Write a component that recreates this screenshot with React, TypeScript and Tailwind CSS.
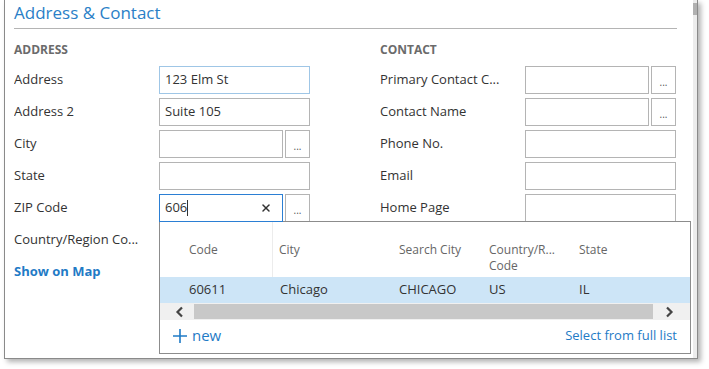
import { X } from 'lucide-react';

const font = { fontFamily: '"Open Sans", "Noto Sans", sans-serif' };

function Field({
  value,
  lookup,
  hover,
}: {
  value?: string;
  lookup?: boolean;
  hover?: boolean;
}) {
  return (
    <div className="flex gap-[2px] w-[151px] h-[28px]">
      <div
        className={`flex-1 h-full border ${
          hover ? 'border-[#9fc6e6]' : 'border-[#b4b4b4]'
        } bg-white flex items-center px-[5px] text-[13px] text-[#333]`}
      >
        {value}
      </div>
      {lookup && <LookupButton />}
    </div>
  );
}

function LookupButton() {
  return (
    <div className="w-[25px] h-full border border-[#b4b4b4] bg-white flex items-end justify-center pb-[6px] text-[10px] leading-none text-[#555]">
      ...
    </div>
  );
}

function Row({ label, children }: { label: string; children: React.ReactNode }) {
  return (
    <div className="flex items-center h-[28px]">
      <div className="w-[145px] text-[13px] text-[#333] truncate">{label}</div>
      {children}
    </div>
  );
}

function ZipDropdown() {
  return (
    <div className="absolute left-0 top-[27px] w-[532px] h-[133px] border border-[#8c8c8c] bg-white z-10 flex flex-col">
      <div className="flex h-[55px] text-[12px] text-[#666] leading-[16px]">
        <div className="w-[113px] pl-[29px] pt-[20px] border-r border-[#ececec]">Code</div>
        <div className="w-[126px] pl-[6px] pt-[20px]">City</div>
        <div className="w-[90px] pt-[20px]">Search City</div>
        <div className="w-[90px] pt-[20px]">
          Country/R...
          <br />
          Code
        </div>
        <div className="pt-[20px]">State</div>
      </div>
      <div className="flex items-center h-[26px] bg-[#cde5f7] text-[13px] text-[#333]">
        <div className="w-[113px] pl-[29px]">60611</div>
        <div className="w-[126px] pl-[7px]">Chicago</div>
        <div className="w-[90px]">CHICAGO</div>
        <div className="w-[90px]">US</div>
        <div>IL</div>
      </div>
      <div className="flex h-[17px] bg-[#f0f0f0] items-center">
        <div className="w-[34px] flex justify-center pl-[4px]">
          <svg width="9" height="12" viewBox="0 0 9 12">
            <path d="M7 1.5 L2.5 6 L7 10.5" stroke="#444" strokeWidth="2.2" fill="none" />
          </svg>
        </div>
        <div className="flex-1 h-[15px] bg-[#c8c8c8]" />
        <div className="w-[37px] flex justify-center pr-[4px]">
          <svg width="9" height="12" viewBox="0 0 9 12">
            <path d="M2 1.5 L6.5 6 L2 10.5" stroke="#444" strokeWidth="2.2" fill="none" />
          </svg>
        </div>
      </div>
      <div className="flex-1 flex items-center justify-between pl-[13px] pr-[13px] pb-[2px]">
        <div className="flex items-center gap-[5px] text-[#1f7bc6]">
          <svg width="14" height="14" viewBox="0 0 14 14">
            <path d="M7 0 V14 M0 7 H14" stroke="#1f7bc6" strokeWidth="1.6" />
          </svg>
          <span className="text-[15px]">new</span>
        </div>
        <span className="text-[13px] text-[#1f7bc6]">Select from full list</span>
      </div>
    </div>
  );
}

export default function App() {
  return (
    <div className="w-[709px] h-[369px] bg-white pl-[4px]" style={font}>
      <div className="w-[694px] h-[359px] border-l border-r border-b border-[#8a8a8a] bg-white flex shadow-[3px_3px_5px_rgba(0,0,0,0.3)]">
        <div className="flex-1 pl-[9px] pr-[16px]">
          <div className="h-[29px] border-b border-[#b4b4b4] text-[17px] leading-[25px] text-[#2a7fc7]">
            Address &amp; Contact
          </div>
          <div className="flex gap-[70px]">
            <div className="w-[296px] flex flex-col gap-[4px]">
              <div className="h-[33px] pt-[13px] text-[12px] font-bold text-[#6b6b6b] leading-[16px]">
                ADDRESS
              </div>
              <Row label="Address">
                <Field value="123 Elm St" hover />
              </Row>
              <Row label="Address 2">
                <Field value="Suite 105" />
              </Row>
              <Row label="City">
                <Field lookup />
              </Row>
              <Row label="State">
                <Field />
              </Row>
              <Row label="ZIP Code">
                <div className="relative flex gap-[2px] w-[151px] h-[28px]">
                  <div className="relative z-20 flex-1 h-full border border-[#2b7fd4] bg-white flex items-center pl-[5px] pr-[10px] text-[13px] text-[#333]">
                    <span>606</span>
                    <span className="w-px h-[16px] bg-[#333]" />
                    <span className="flex-1" />
                    <X size={12} strokeWidth={3} color="#333" />
                  </div>
                  <LookupButton />
                  <ZipDropdown />
                </div>
              </Row>
              <Row label="Country/Region Co...">
                <Field />
              </Row>
              <div className="h-[28px] flex items-center text-[13px] font-bold text-[#1f7bc6]">
                Show on Map
              </div>
            </div>
            <div className="w-[296px] flex flex-col gap-[4px]">
              <div className="h-[33px] pt-[13px] text-[12px] font-bold text-[#6b6b6b] leading-[16px]">
                CONTACT
              </div>
              <Row label="Primary Contact C...">
                <Field lookup />
              </Row>
              <Row label="Contact Name">
                <Field lookup />
              </Row>
              <Row label="Phone No.">
                <Field />
              </Row>
              <Row label="Email">
                <Field />
              </Row>
              <Row label="Home Page">
                <Field />
              </Row>
            </div>
          </div>
        </div>
        <div className="w-[4px] bg-[#ececec] flex flex-col pt-[3px]">
          <div className="h-[12px] bg-[#b0b0b0]" />
        </div>
      </div>
    </div>
  );
}
